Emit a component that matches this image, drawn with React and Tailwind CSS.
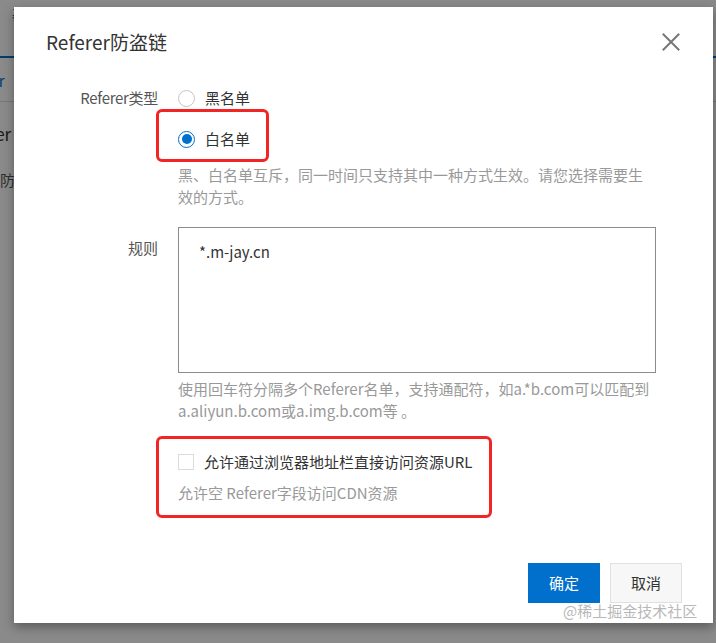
import React from 'react'

const FONT = { fontFamily: '"Noto Sans CJK SC", "Noto Sans", sans-serif' }

function Radio({ checked, label }) {
  return (
    <label className="flex items-center gap-[10px] h-[30px]">
      {checked ? (
        <span className="w-[17px] h-[17px] rounded-full border border-[#0070cc] flex items-center justify-center">
          <span className="w-[10px] h-[10px] rounded-full bg-[#0070cc]" />
        </span>
      ) : (
        <span className="w-[17px] h-[17px] rounded-full border border-[#c4c4c4] bg-white" />
      )}
      <span className="text-[15px] text-[#333]">{label}</span>
    </label>
  )
}

export default function App() {
  return (
    <div className="relative w-[716px] h-[643px] overflow-hidden bg-white" style={FONT}>
      {/* page behind the modal */}
      <div className="flex flex-col -ml-[46px] pt-[4px]">
        <div className="flex items-center gap-[8px] h-[20px] text-[13px] text-[#333]">
          <span className="w-[10px] h-[10px] rounded-full bg-[#2a9d4a] ml-[36px]" />
          <span className="ml-[4px]">基础配置</span>
        </div>
        <div className="h-[34px] border-b-2 border-[#0070cc]" />
        <div className="h-[44px] pt-[4px] flex items-center text-[15px] text-[#0070cc] border-b border-[#ddd]">Referer</div>
        <div className="h-[58px] pt-[6px] flex items-center text-[17px] text-[#333]">Referer</div>
        <div className="h-[40px] flex items-center text-[15px] text-[#555] pl-[46px]">防盗链</div>
      </div>

      {/* overlay */}
      <div className="absolute inset-0 bg-black/[0.46]" />

      {/* dialog */}
      <div className="absolute left-[14px] top-[7px] w-[699px] h-[616px] bg-white shadow-[0_4px_10px_rgba(0,0,0,0.35)] flex flex-col px-[32px]">
        <div className="h-[70px] flex items-center justify-between">
          <h2 className="text-[19px] text-[#333]">Referer防盗链</h2>
          <svg width="18" height="18" viewBox="0 0 18 18" className="mr-[1px]">
            <path d="M1.5 1.5 L16.5 16.5 M16.5 1.5 L1.5 16.5" stroke="#777" strokeWidth="2" strokeLinecap="square" />
          </svg>
        </div>

        <div className="flex mt-[6px]">
          <div className="w-[112px] text-right text-[15px] text-[#555] leading-[30px] shrink-0 tracking-[-0.3px]">Referer类型</div>
          <div className="ml-[20px] w-[478px] flex flex-col">
            <Radio label="黑名单" />
            <div className="mt-[11px]">
              <Radio checked label="白名单" />
            </div>
            <p className="mt-[10px] text-[15px] leading-[22px] text-[#999]">
              黑、白名单互斥，同一时间只支持其中一种方式生效。请您选择需要生效的方式。
            </p>
          </div>
        </div>

        <div className="flex mt-[19px]">
          <div className="w-[112px] text-right text-[15px] text-[#555] leading-[22px] pt-[10px] shrink-0">规则</div>
          <div className="ml-[20px] w-[478px] flex flex-col">
            <textarea
              className="h-[146px] border border-[#8c8c8c] px-[20px] py-[12px] text-[15px] leading-[24px] text-[#333] resize-none outline-none"
              style={FONT}
              defaultValue="*.m-jay.cn"
            />
            <p className="mt-[5px] text-[15px] leading-[22px] text-[#999]">
              使用回车符分隔多个Referer名单，支持通配符，如a.*b.com可以匹配到a.aliyun.b.com或a.img.b.com等 。
            </p>
            <div className="mt-[29px] flex items-center gap-[10px] h-[22px]">
              <span className="w-[16px] h-[16px] border border-[#dcdcdc] bg-white" />
              <span className="text-[15px] text-[#333]">允许通过浏览器地址栏直接访问资源URL</span>
            </div>
            <p className="mt-[9px] text-[15px] leading-[22px] text-[#999]">允许空 Referer字段访问CDN资源</p>
          </div>
        </div>

        <div className="mt-auto mb-[20px] flex justify-end gap-[10px]">
          <button className="w-[72px] h-[40px] bg-[#0070cc] text-white text-[15px]">确定</button>
          <button className="w-[72px] h-[40px] bg-[#f7f7f7] border border-[#e0e0e0] text-[#333] text-[15px] mr-[-1px]">取消</button>
        </div>

        {/* annotation boxes */}
        <div className="absolute left-[142px] top-[102px] w-[113px] h-[53px] border-[3px] border-[#f22424] rounded-[6px]" />
        <div className="absolute left-[142px] top-[429px] w-[336px] h-[82px] border-[3px] border-[#f22424] rounded-[6px]" />
      </div>

      {/* watermark */}
      <div className="absolute left-[563px] top-[600px] text-[15px] leading-[22px] text-[#b8b8b8]">@稀土掘金技术社区</div>
    </div>
  )
}
